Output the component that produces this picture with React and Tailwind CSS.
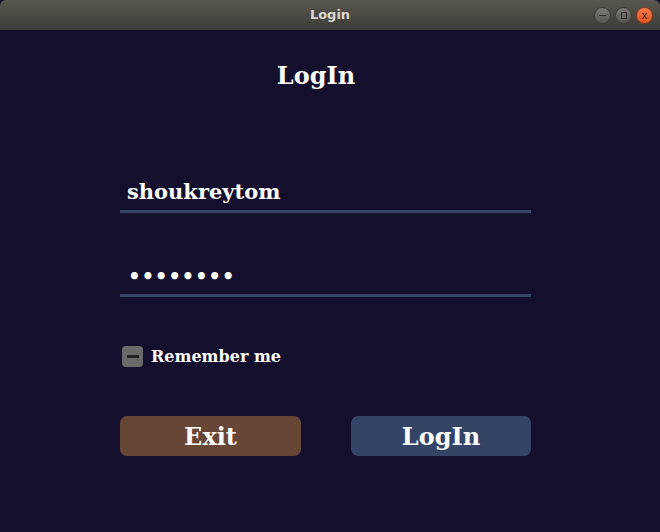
export default function App() {
  const serif = { fontFamily: '"DejaVu Serif", serif' };
  return (
    <div className="w-[660px] h-[532px] flex flex-col bg-[#130f2d] overflow-hidden">
      <div className="h-[30px] shrink-0 relative flex items-center justify-center bg-gradient-to-b from-[#5a5750] to-[#3e3c37] rounded-t-[6px]">
        <span className="text-[13px] font-bold text-[#dcd8cf]" style={{ fontFamily: '"DejaVu Sans", sans-serif' }}>Login</span>
        <div className="absolute right-[7px] top-[7px] flex gap-[4px]">
          <div className="w-[17px] h-[17px] rounded-full bg-gradient-to-b from-[#7a7872] to-[#5a5853] border border-[#3a3834] flex items-center justify-center">
            <div className="w-[7px] h-[1px] bg-[#2e2d2a]" />
          </div>
          <div className="w-[17px] h-[17px] rounded-full bg-gradient-to-b from-[#7a7872] to-[#5a5853] border border-[#3a3834] flex items-center justify-center">
            <div className="w-[6px] h-[7px] border border-[#2e2d2a]" />
          </div>
          <div className="w-[17px] h-[17px] rounded-full bg-gradient-to-b from-[#f47a4a] to-[#e2531f] border border-[#8a3a18] flex items-center justify-center">
            <span className="text-[10px] leading-none text-[#3a1a0e]" style={{ fontFamily: '"DejaVu Sans", sans-serif' }}>x</span>
          </div>
        </div>
      </div>
      <div className="flex flex-col" style={serif}>
        <div className="h-[30px] mt-[31px] ml-[120px] w-[392px] text-center text-[24px] font-bold text-white leading-[30px]">LogIn</div>
        <div className="ml-[120px] w-[411px] flex flex-col mt-[83px]">
          <div className="h-[36px] pl-[7px] flex items-center text-[21px] font-bold text-white">shoukreytom</div>
          <div className="h-[3px] bg-[#354565]" />
          <div className="h-[36px] mt-[45px] pl-[8px] flex items-center text-[20px] font-bold text-white tracking-[0.6px]">••••••••</div>
          <div className="h-[3px] bg-[#354565]" />
          <div className="mt-[49px] flex items-center h-[21px]">
            <div className="ml-[2px] w-[21px] h-[21px] rounded-[4px] bg-[#6b6a6a] flex items-center justify-center">
              <div className="w-[12px] h-[3px] bg-[#222]" />
            </div>
            <span className="ml-[8px] text-[16px] font-bold text-white">Remember me</span>
          </div>
          <div className="mt-[49px] flex justify-between">
            <button className="w-[181px] h-[40px] rounded-[7px] bg-[#674636] text-white text-[24px] font-bold leading-none pt-[1px]">Exit</button>
            <button className="w-[180px] h-[40px] rounded-[7px] bg-[#334466] text-white text-[24px] font-bold leading-none pt-[1px]">LogIn</button>
          </div>
        </div>
      </div>
    </div>
  );
}
